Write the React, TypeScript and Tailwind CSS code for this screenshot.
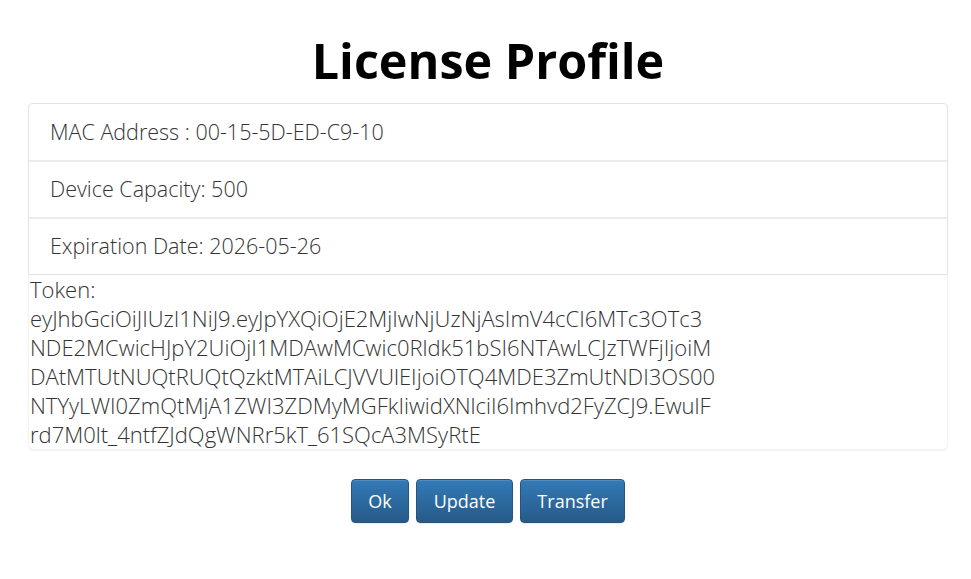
import React from "react";

const tokenLines = [
  "eyJhbGciOiJIUzI1NiJ9.eyJpYXQiOjE2MjIwNjUzNjAsImV4cCI6MTc3OTc3",
  "NDE2MCwicHJpY2UiOjI1MDAwMCwic0Rldk51bSI6NTAwLCJzTWFjIjoiM",
  "DAtMTUtNUQtRUQtQzktMTAiLCJVVUlEIjoiOTQ4MDE3ZmUtNDI3OS00",
  "NTYyLWI0ZmQtMjA1ZWI3ZDMyMGFkIiwidXNlciI6Imhvd2FyZCJ9.EwulF",
  "rd7M0lt_4ntfZJdQgWNRr5kT_61SQcA3MSyRtE",
];

export default function App() {
  return (
    <div className="w-[971px] h-[579px] bg-white" style={{ fontFamily: '"Open Sans", sans-serif' }}>
      <div className="ml-[28px] w-[920px] pt-[27px]">
        <h1 className="text-center text-[48.5px] font-bold leading-[66px] text-black h-[76px]">License Profile</h1>
        <div className="rounded-t-[4px] border border-[#e3e3e3]">
          <div className="h-[56px] flex items-center pl-[21px] text-[21.5px] font-light text-[#333]">MAC Address : 00-15-5D-ED-C9-10</div>
          <div className="h-[57px] flex items-center pl-[21px] text-[21.5px] font-light text-[#333] border-t-2 border-[#ebebeb]">Device Capacity: 500</div>
          <div className="h-[57px] flex items-center pl-[21px] text-[21.5px] font-light text-[#333] border-t-2 border-[#ebebeb]">Expiration Date: 2026-05-26</div>
        </div>
        <div className="rounded-b-[6px] border border-t-0 border-[#f3f3f3] shadow-[0_1px_2px_rgba(0,0,0,0.06)] text-[22px] font-light text-[#333] leading-[29px]">
          <div className="pl-[1px]">Token:</div>
          {tokenLines.map((l) => (
            <div key={l} className="pl-[1px]">{l}</div>
          ))}
        </div>
        <div className="flex justify-center gap-[7px] mt-[29px]">
          {["Ok", "Update", "Transfer"].map((b) => (
            <button
              key={b}
              className="h-[44px] px-[16.5px] rounded-[4px] border border-[#245580] bg-[linear-gradient(#337ab7,#265a88)] text-white text-[18px] shadow-[inset_0_1px_0_rgba(255,255,255,0.15),0_1px_1px_rgba(0,0,0,0.075)]"
            >
              {b}
            </button>
          ))}
        </div>
      </div>
    </div>
  );
}
